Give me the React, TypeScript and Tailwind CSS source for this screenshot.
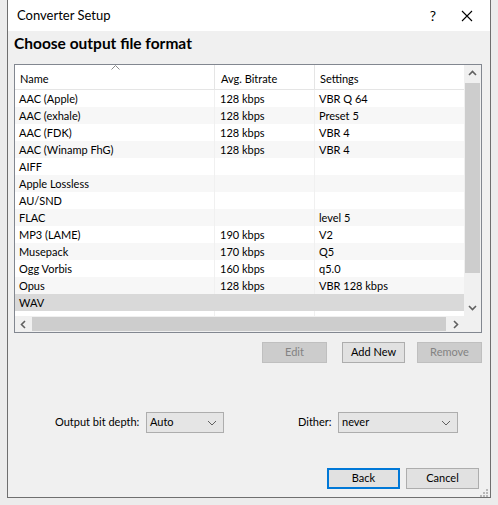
import React from "react";

const formats = [
  ["AAC (Apple)", "128 kbps", "VBR Q 64"],
  ["AAC (exhale)", "128 kbps", "Preset 5"],
  ["AAC (FDK)", "128 kbps", "VBR 4"],
  ["AAC (Winamp FhG)", "128 kbps", "VBR 4"],
  ["AIFF", "", ""],
  ["Apple Lossless", "", ""],
  ["AU/SND", "", ""],
  ["FLAC", "", "level 5"],
  ["MP3 (LAME)", "190 kbps", "V2"],
  ["Musepack", "170 kbps", "Q5"],
  ["Ogg Vorbis", "160 kbps", "q5.0"],
  ["Opus", "128 kbps", "VBR 128 kbps"],
  ["WAV", "", ""],
];

const font = { fontFamily: 'Lato, "Noto Sans", sans-serif' };

// small chevron used by scrollbars / combos
const Chevron = ({ dir, className }: { dir: "up" | "down" | "left" | "right"; className?: string }) => {
  const paths = {
    up: "M1 6 L4.5 2.5 L8 6",
    down: "M1 3 L4.5 6.5 L8 3",
    left: "M6 1 L2.5 4.5 L6 8",
    right: "M3 1 L6.5 4.5 L3 8",
  };
  return (
    <svg width="9" height="9" viewBox="0 0 9 9" className={className}>
      <path d={paths[dir]} fill="none" stroke="currentColor" strokeWidth="1.6" />
    </svg>
  );
};

const Combo = ({ value, width }: { value: string; width: string }) => (
  <div className={`${width} h-[21px] shrink-0 flex items-center justify-between border border-[#adadad] bg-[#e5e5e5] pl-[3px] pr-[6px]`}>
    <span>{value}</span>
    <svg width="10" height="6" viewBox="0 0 10 6" className="text-[#606060]">
      <path d="M1 1 L5 5 L9 1" fill="none" stroke="currentColor" strokeWidth="1" />
    </svg>
  </div>
);

const App = () => {
  return (
    <div className="w-[498px] h-[505px] bg-[#ececec] pl-[7px] pr-[7px] pb-[7px] text-[11px] text-black" style={font}>
      <div className="w-[484px] h-[498px] border-x border-b border-[#6f6f6f] bg-[#f0f0f0] flex flex-col">
        {/* title bar */}
        <div className="h-[31px] shrink-0 bg-white flex items-center pl-[9px] text-[13px]">
          <span className="flex-1">Converter Setup</span>
          <span className="w-[46px] text-center text-[14px]">?</span>
          <svg width="12" height="12" viewBox="0 0 12 12" className="mr-[17px] ml-[5px]">
            <path d="M1 1 L11 11 M11 1 L1 11" stroke="#000" strokeWidth="1.1" />
          </svg>
        </div>

        <div className="h-[33px] shrink-0 flex items-center pl-[6px] pb-[8px]">
          <span className="text-[15.5px] font-bold">Choose output file format</span>
        </div>

        {/* list view */}
        <div className="ml-[6px] w-[468px] h-[269px] shrink-0 border border-[#828790] bg-white flex flex-col">
          <div className="flex h-[251px] shrink-0">
            <div className="w-[449px] flex flex-col overflow-hidden">
              <div className="relative h-[25px] shrink-0 flex border-b border-[#e5e5e5]">
                <svg width="9" height="5" viewBox="0 0 9 5" className="absolute left-[96px] top-[0px] text-[#8c8c8c]">
                  <path d="M0.5 4.5 L4.5 0.5 L8.5 4.5" fill="none" stroke="currentColor" strokeWidth="1" />
                </svg>
                <div className="w-[200px] pl-[5px] pt-[6px] border-r border-[#e5e5e5]">Name</div>
                <div className="w-[100px] pl-[6px] pt-[6px] border-r border-[#e5e5e5]">Avg. Bitrate</div>
                <div className="flex-1 pl-[5px] pt-[6px]">Settings</div>
              </div>
              {formats.map(([name, rate, settings], i) => (
                <div
                  key={name}
                  className={`flex h-[17px] shrink-0 leading-[17px] ${
                    i === 12 ? "bg-[#d9d9d9]" : i % 2 === 1 ? "bg-[#f7f7f7]" : "bg-white"
                  }`}
                >
                  <div className={`w-[200px] pl-[4px] border-r ${i === 12 ? "border-transparent" : "border-[#f0f0f0]"}`}>{name}</div>
                  <div className={`w-[100px] pl-[5px] border-r ${i === 12 ? "border-transparent" : "border-[#f0f0f0]"}`}>{rate}</div>
                  <div className="flex-1 pl-[4px]">{settings}</div>
                </div>
              ))}
              <div className="flex flex-1">
                <div className="w-[200px] border-r border-[#f0f0f0]" />
                <div className="w-[100px] border-r border-[#f0f0f0]" />
              </div>
            </div>
            {/* vertical scrollbar */}
            <div className="w-[17px] bg-[#f0f0f0] flex flex-col items-center">
              <div className="h-[17px] shrink-0 flex items-center justify-center text-[#606060]">
                <Chevron dir="up" />
              </div>
              <div className="w-[15px] h-[190px] shrink-0 bg-[#cdcdcd] mt-[1px]" />
              <div className="flex-1" />
              <div className="h-[17px] shrink-0 flex items-center justify-center text-[#606060]">
                <Chevron dir="down" />
              </div>
            </div>
          </div>
          {/* horizontal scrollbar */}
          <div className="flex h-[16px] shrink-0">
            <div className="w-[449px] bg-[#f0f0f0] flex items-center">
              <div className="w-[17px] flex justify-center text-[#606060]">
                <Chevron dir="left" />
              </div>
              <div className="w-[414px] h-[14px] bg-[#cdcdcd]" />
              <div className="flex-1 flex justify-center text-[#606060]">
                <Chevron dir="right" />
              </div>
            </div>
            <div className="flex-1 bg-[#f0f0f0]" />
          </div>
        </div>

        {/* edit buttons */}
        <div className="flex shrink-0 justify-end gap-[15px] pr-[8px] mt-[9px]">
          <div className="w-[65px] h-[21px] flex items-center justify-center border border-[#bfbfbf] bg-[#cccccc] text-[#838383]">Edit</div>
          <div className="w-[63px] h-[21px] flex items-center justify-center border border-[#adadad] bg-[#e1e1e1] mr-[-2px]">Add New</div>
          <div className="w-[65px] h-[21px] flex items-center justify-center border border-[#bfbfbf] bg-[#cccccc] text-[#838383] ml-[-1px]">Remove</div>
        </div>

        {/* options */}
        <div className="flex shrink-0 items-center mt-[49px] pl-[47px]">
          <span className="w-[91px] whitespace-nowrap">Output bit depth:</span>
          <Combo value="Auto" width="w-[78px]" />
          <span className="ml-[74px] w-[40px] whitespace-nowrap">Dither:</span>
          <Combo value="never" width="w-[120px]" />
        </div>

        {/* bottom buttons */}
        <div className="flex shrink-0 justify-end gap-[6px] pr-[11px] mt-[35px]">
          <div className="w-[73px] h-[21px] flex items-center justify-center border-2 border-[#0078d7] bg-[#e1e1e1]">Back</div>
          <div className="w-[73px] h-[21px] flex items-center justify-center border border-[#adadad] bg-[#e1e1e1]">Cancel</div>
        </div>
        <div className="flex-1 flex justify-end items-end pr-[2px] pb-[2px]">
          <svg width="8" height="8" viewBox="0 0 8 8">
            <g fill="#b8b8b8">
              <rect x="6" y="0" width="2" height="2" />
              <rect x="3" y="3" width="2" height="2" />
              <rect x="6" y="3" width="2" height="2" />
              <rect x="0" y="6" width="2" height="2" />
              <rect x="3" y="6" width="2" height="2" />
              <rect x="6" y="6" width="2" height="2" />
            </g>
          </svg>
        </div>
      </div>
    </div>
  );
};

export default App;
